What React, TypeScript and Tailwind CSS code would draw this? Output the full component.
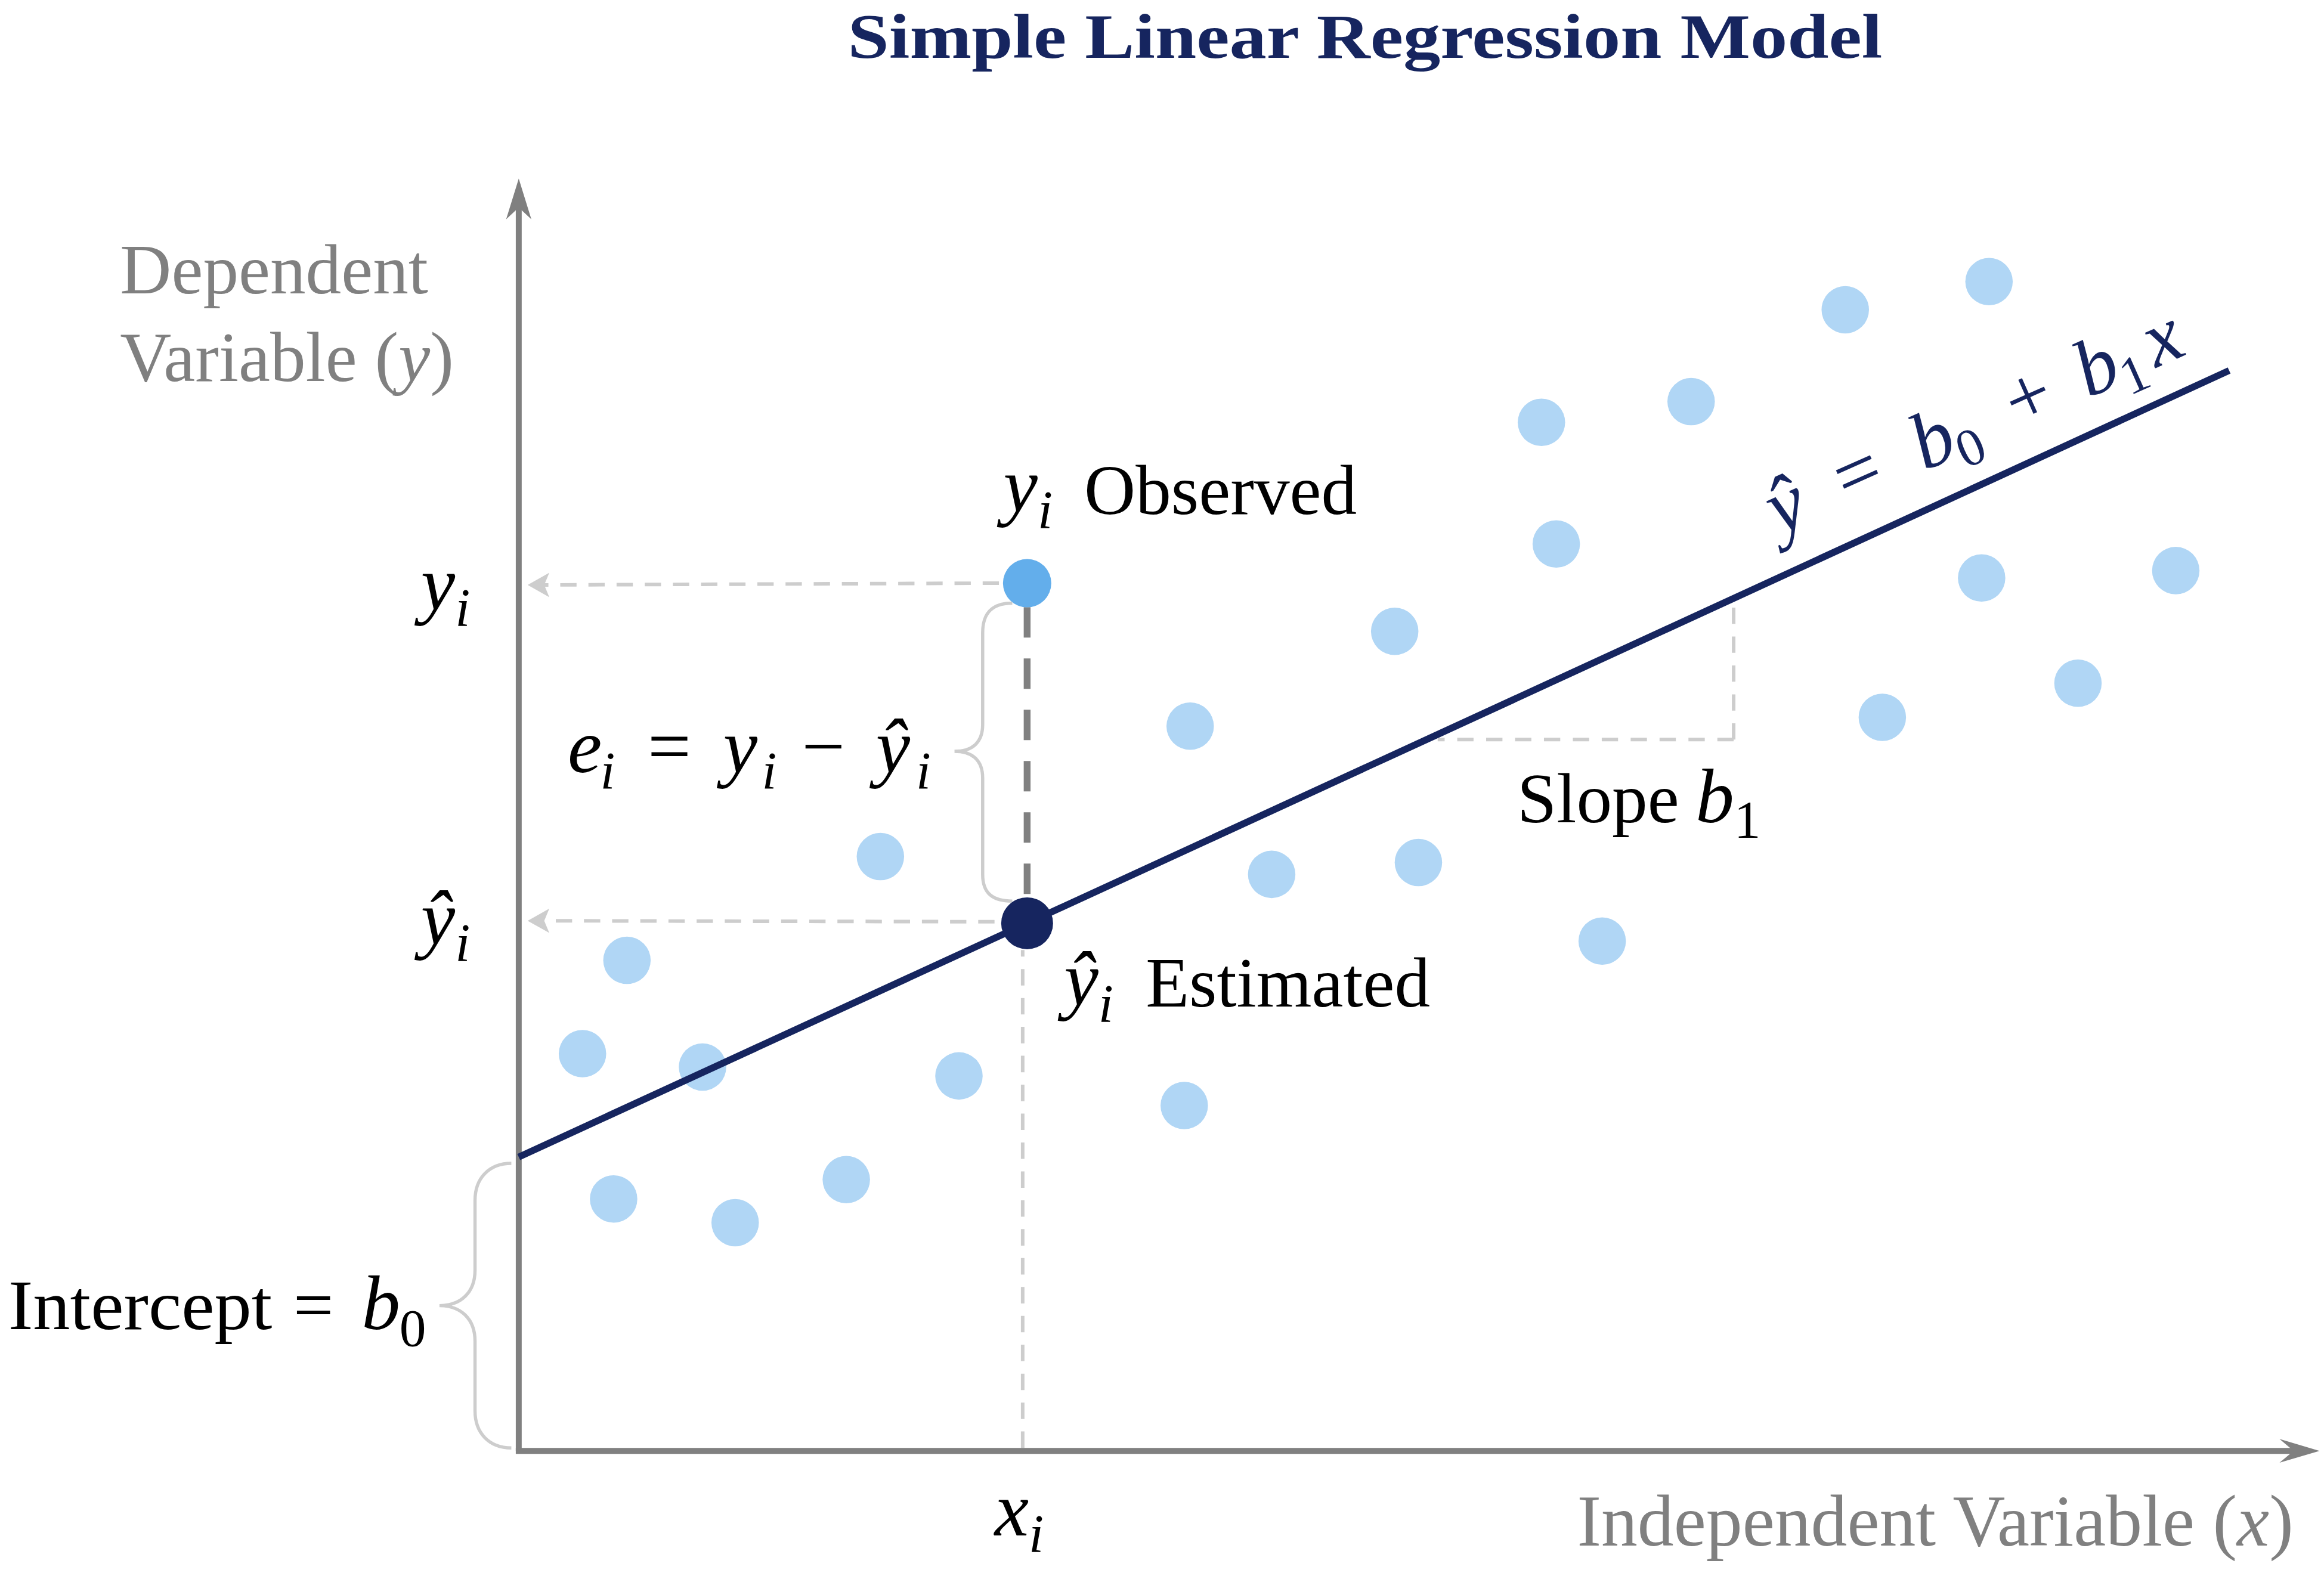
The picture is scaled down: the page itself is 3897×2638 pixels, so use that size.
import React from "react";

const NAVY = "#16255f";
const DOT = "#b0d6f5";
const AXIS = "#808080";
const LIGHT = "#cdcdcd";

const serif = "'Liberation Serif', 'Times New Roman', serif";
const math = "'Liberation Serif', 'Times New Roman', serif";

// light blue sample points, in figure units
const points: [number, number][] = [
  [1245, 209], [1342, 190], [1040, 285], [1141, 271], [1050, 367],
  [941, 426], [1337, 390], [1468, 385], [1402, 461], [1270, 484],
  [803, 490], [594, 578], [858, 590], [957, 582], [1081, 635],
  [423, 648], [393, 711], [474, 720], [647, 726], [799, 746],
  [414, 809], [496, 825], [571, 796],
];

function Sub({ x, y, base, sub, hat = false, size = 52 }: { x: number; y: number; base: string; sub: string; hat?: boolean; size?: number }) {
  return (
    <text x={x} y={y} fontFamily={math} fontSize={size} fontStyle="italic" fill="#000">
      <tspan>{hat ? "\u0177" : base}</tspan>
      <tspan fontSize={size * 0.7} dy={size * 0.22}>{sub}</tspan>
    </text>
  );
}

function Brace({ d }: { d: string }) {
  return <path d={d} fill="none" stroke={LIGHT} strokeWidth={2.2} />;
}

export default function App() {
  return (
    <div className="w-[3897px] h-[2638px] bg-white overflow-hidden">
      <svg width={3897} height={2638} viewBox="0 0 1568 1061.4" className="block">
        {/* title */}
        <text x={572} y={39} fontFamily={serif} fontWeight={700} fontSize={43} fill={NAVY} textLength={698} lengthAdjust="spacingAndGlyphs">
          Simple Linear Regression Model
        </text>

        {/* axis labels */}
        <text x={81} y={198} fontFamily={serif} fontSize={48} fill={AXIS}>Dependent</text>
        <text x={81} y={257} fontFamily={serif} fontSize={48} fill={AXIS}>
          Variable (<tspan fontStyle="italic">y</tspan>)
        </text>
        <text x={1064} y={1043} fontFamily={serif} fontSize={49} fill={AXIS}>
          Independent Variable (<tspan fontStyle="italic">x</tspan>)
        </text>

        {/* guide lines */}
        <line x1={693} y1={393.4} x2={367} y2={394.7} stroke={LIGHT} strokeWidth={2.4} strokeDasharray="11 8" />
        <polygon points="356,394.7 370.6,386.5 367.2,394.7 370.6,403" fill={LIGHT} />
        <line x1={690} y1={622} x2={367} y2={621.3} stroke={LIGHT} strokeWidth={2.4} strokeDasharray="11 8" />
        <polygon points="356,621.3 370.6,613.1 367.2,621.3 370.6,629.5" fill={LIGHT} />
        <line x1={690} y1={977} x2={690} y2={641} stroke={LIGHT} strokeWidth={2.4} strokeDasharray="11.1 8.4" />
        <path d="M1169.7,499 L970,499" stroke={LIGHT} strokeWidth={2.4} strokeDasharray="11 8.5" />
        <path d="M1169.7,499 L1169.7,405" stroke={LIGHT} strokeWidth={2.4} strokeDasharray="11 8.5" />

        {/* braces */}
        <Brace d="M683,407 C670,407 663,413 663,427 L663,489 C663,501 656,507 644,507 C656,507 663,513 663,525 L663,590 C663,603 670,608 683,608" />
        <Brace d="M345,785 C330,785 320.5,795 320.5,810 L320.5,857 C320.5,872 311,881 296.5,881 C311,881 320.5,890 320.5,905 L320.5,952 C320.5,967 330,977 345,977" />

        {/* axes */}
        <line x1={350} y1={979} x2={350} y2={138} stroke={AXIS} strokeWidth={4} />
        <polygon points="350,120.5 358.5,148 350,140 341.5,148" fill={AXIS} />
        <line x1={348} y1={979} x2={1548} y2={979} stroke={AXIS} strokeWidth={4} />
        <polygon points="1565,979 1538,987 1547.5,979 1538,971" fill={AXIS} />

        {/* sample points */}
        {points.map(([cx, cy], i) => (
          <circle key={i} cx={cx} cy={cy} r={16} fill={DOT} />
        ))}

        {/* residual */}
        <line x1={693} y1={409.7} x2={693} y2={607} stroke={AXIS} strokeWidth={4.6} strokeDasharray="20.5 14.1" />

        {/* regression line */}
        <line x1={350} y1={780.7} x2={1504} y2={250} stroke={NAVY} strokeWidth={4.6} />

        <circle cx={693} cy={393.5} r={16.3} fill="#63aeeb" />
        <circle cx={693} cy={623} r={17.5} fill={NAVY} />

        {/* equation along the line */}
        <g transform="translate(1197 363) rotate(-24)" fontFamily={math} fontSize={54} fill={NAVY}>
          <text x={4} y={0} fontStyle="italic">{"\u0177"}</text>
          <text x={54} y={0}>=</text>
          <text x={111} y={0} fontStyle="italic">b</text>
          <text x={137} y={10} fontSize={36}>0</text>
          <text x={180} y={0}>+</text>
          <text x={232} y={0} fontStyle="italic">b</text>
          <text x={258} y={10} fontSize={36}>1</text>
          <text x={282} y={0} fontStyle="italic">x</text>
        </g>

        {/* point labels */}
        <Sub x={284} y={411} base="y" sub="i" />
        <Sub x={284} y={637} base="y" sub="i" hat />
        <Sub x={677} y={345} base="y" sub="i" />
        <text x={731.5} y={347} fontFamily={serif} fontSize={48} fill="#000">Observed</text>
        <Sub x={718} y={678} base="y" sub="i" hat />
        <text x={773} y={679} fontFamily={serif} fontSize={48} fill="#000">Estimated</text>
        <Sub x={671} y={1036} base="x" sub="i" />

        {/* residual formula */}
        <g fontFamily={math} fontSize={52} fill="#000">
          <text x={383} y={521} fontStyle="italic">e</text>
          <text x={405} y={532} fontSize={36} fontStyle="italic">i</text>
          <text x={437} y={521}>=</text>
          <text x={488} y={521} fontStyle="italic">y</text>
          <text x={514} y={532} fontSize={36} fontStyle="italic">i</text>
          <text x={541} y={521}>{"\u2212"}</text>
          <text x={591} y={521} fontStyle="italic">{"\u0177"}</text>
          <text x={618} y={532} fontSize={36} fontStyle="italic">i</text>
        </g>

        {/* intercept */}
        <text x={5.6} y={897} fontFamily={serif} fontSize={48} fill="#000" textLength={178} lengthAdjust="spacingAndGlyphs">Intercept</text>
        <text x={198} y={897} fontFamily={serif} fontSize={48} fill="#000">=</text>
        <text x={244} y={897} fontFamily={math} fontSize={52} fontStyle="italic" fill="#000">b</text>
        <text x={269.5} y={908} fontFamily={math} fontSize={36} fill="#000">0</text>

        {/* slope */}
        <text x={1023.6} y={555} fontFamily={serif} fontSize={48} fill="#000">Slope</text>
        <text x={1144} y={555} fontFamily={math} fontSize={52} fontStyle="italic" fill="#000">b</text>
        <text x={1170} y={565} fontFamily={math} fontSize={36} fill="#000">1</text>
      </svg>
    </div>
  );
}
